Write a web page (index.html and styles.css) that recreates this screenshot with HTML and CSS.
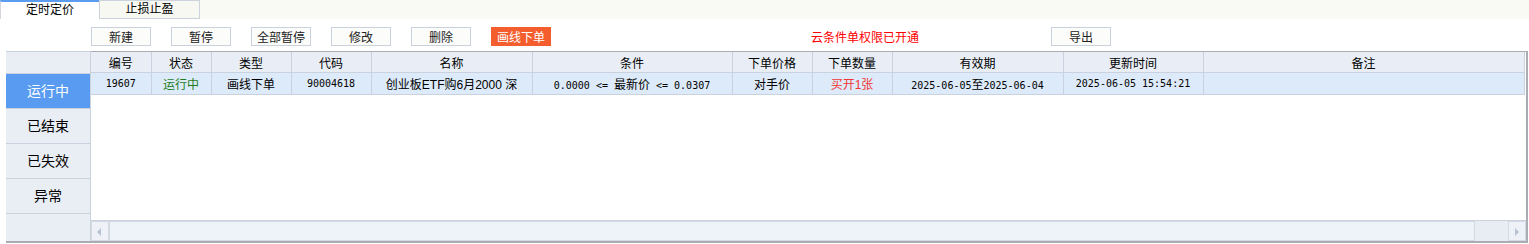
FILE: index.html
```html
<!DOCTYPE html>
<html lang="zh-CN">
<head>
    <meta charset="UTF-8">
    <title>条件单</title>
    <link rel="stylesheet" href="styles.css">
</head>
<body>
    <div class="tabs">
        <div class="tab active">定时定价</div>
        <div class="tab">止损止盈</div>
    </div>
    <div class="toolbar">
        <button class="btn">新建</button>
        <button class="btn">暂停</button>
        <button class="btn">全部暂停</button>
        <button class="btn">修改</button>
        <button class="btn">删除</button>
        <button class="btn btn-draw">画线下单</button>
        <span class="notice">云条件单权限已开通</span>
        <button class="btn btn-export">导出</button>
    </div>
    <div class="panel">
        <div class="sidebar">
            <div class="side-head"></div>
            <div class="side-item selected">运行中</div>
            <div class="side-item">已结束</div>
            <div class="side-item">已失效</div>
            <div class="side-item">异常</div>
        </div>
        <div class="grid">
            <div class="grid-body">
                <table>
                    <colgroup>
                        <col style="width:60px"><col style="width:60px"><col style="width:80px"><col style="width:80px">
                        <col style="width:161px"><col style="width:200px"><col style="width:80px"><col style="width:80px">
                        <col style="width:171px"><col style="width:140px"><col style="width:321px">
                    </colgroup>
                    <thead>
                        <tr>
                            <th>编号</th><th>状态</th><th>类型</th><th>代码</th><th>名称</th><th>条件</th>
                            <th>下单价格</th><th>下单数量</th><th>有效期</th><th>更新时间</th><th>备注</th>
                        </tr>
                    </thead>
                    <tbody>
                        <tr>
                            <td class="num">19607</td>
                            <td class="running">运行中</td>
                            <td>画线下单</td>
                            <td class="num">90004618</td>
                            <td>创业板ETF购6月2000 深</td>
                            <td class="num">0.0000 &lt;= <span class="cjk">最新价</span> &lt;= 0.0307</td>
                            <td>对手价</td>
                            <td class="buy">买开1张</td>
                            <td class="num">2025-06-05<span class="cjk">至</span>2025-06-04</td>
                            <td class="num">2025-06-05 15:54:21</td>
                            <td></td>
                        </tr>
                    </tbody>
                </table>
            </div>
            <div class="hscroll">
                <div class="arrow left"></div>
                <div class="thumb"></div>
                <div class="track"></div>
                <div class="arrow right"></div>
            </div>
        </div>
    </div>
</body>
</html>
```

FILE: styles.css
```css
body {
    margin: 0;
    width: 1529px;
    height: 244px;
    overflow: hidden;
    background: #fff;
    font-family: "Liberation Sans", "Noto Sans CJK SC", sans-serif;
    font-size: 12px;
    color: #000;
}
.tabs {
    display: flex;
    height: 19px;
    background: #fafaf5;
}
.tab {
    box-sizing: border-box;
    width: 101px;
    height: 19px;
    line-height: 17px;
    text-align: center;
    border: 1px solid #cdd3dd;
    background: #f8f8f3;
}
.tab.active {
    width: 99px;
    border: none;
    border-top: 2px solid #5b9bf0;
    border-left: 1px solid #d4d8de;
    background: #fff;
    line-height: 16px;
}
.toolbar {
    display: flex;
    align-items: center;
    height: 19px;
    padding: 8px 0 5px 91px;
}
.btn {
    box-sizing: border-box;
    width: 60px;
    height: 19px;
    margin-right: 20px;
    padding: 0;
    border: 1px solid #c9d1dd;
    background: #fcfcfa;
    font-family: inherit;
    font-size: 12px;
    color: #222;
}
.btn-draw {
    margin-right: 0;
    background: #f45d2e;
    border-color: #f45d2e;
    color: #fff;
}
.notice {
    margin-left: 260px;
    width: 240px;
    color: #f00;
}
.btn-export {
    margin-right: 0;
}
.panel {
    display: flex;
    box-sizing: border-box;
    margin-left: 6px;
    width: 1522px;
    height: 192px;
    border-top: 1px solid #c9d2de;
    border-bottom: 2px solid #a9adb3;
}
.sidebar {
    width: 84px;
    background: #e9eef5;
    border-right: 1px solid #c9d2de;
}
.side-head {
    height: 21px;
    border-bottom: 1px solid #c9d2de;
}
.side-item {
    height: 34px;
    line-height: 34px;
    text-align: center;
    font-size: 14px;
    border-bottom: 1px solid #c9d2de;
}
.side-item.selected {
    background: #589bf1;
    color: #fff;
}
.grid {
    flex: 1;
    display: flex;
    flex-direction: column;
    border-top: 1px solid #a9adb3;
    margin-top: -1px;
    border-right: 2px solid #a9adb3;
}
.grid-body {
    flex: 1;
    overflow: hidden;
}
table {
    border-collapse: collapse;
    table-layout: fixed;
    width: 1433px;
}
th, td {
    padding: 0;
    text-align: center;
    white-space: nowrap;
    overflow: hidden;
    border-right: 1px solid #c9d2de;
    border-bottom: 1px solid #c9d2de;
    font-weight: normal;
}
th {
    height: 20px;
    background: #e9eef6;
}
td {
    height: 21px;
    background: #ddeaf9;
}
td.num {
    font-family: "DejaVu Sans Mono", "Noto Sans CJK SC", monospace;
    font-size: 10px;
}
td .cjk {
    font-family: "Noto Sans CJK SC", sans-serif;
    font-size: 12px;
}
td.running {
    color: #1b7d1b;
}
td.buy {
    color: #f23434;
}
.hscroll {
    display: flex;
    height: 20px;
    border-top: 1px solid #c9d2de;
    background: #e8edf4;
}
.arrow {
    position: relative;
    width: 16px;
    border: 1px solid #d3dae4;
    background: #eef2f8;
}
.arrow::after {
    content: "";
    position: absolute;
    top: 6px;
    border-top: 4px solid transparent;
    border-bottom: 4px solid transparent;
}
.arrow.left::after {
    left: 5px;
    border-right: 4px solid #b8c2d0;
}
.arrow.right::after {
    left: 6px;
    border-left: 4px solid #b8c2d0;
}
.thumb {
    width: 1364px;
    border: 1px solid #d3dae4;
    background: #eef3f9;
}
.track {
    flex: 1;
}
```
